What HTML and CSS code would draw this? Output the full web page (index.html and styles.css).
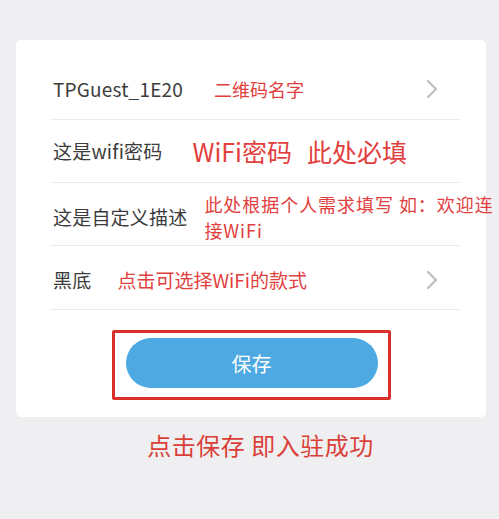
FILE: index.html
```html
<!DOCTYPE html>
<html lang="zh-CN">
<head>
<meta charset="utf-8">
<title>WiFi</title>
<link rel="stylesheet" href="styles.css">
</head>
<body>
<div class="page">
  <div class="card">
    <div class="list">
      <div class="row row-1">
        <span class="label">TPGuest_1E20</span>
        <span class="note note-1">二维码名字</span>
        <svg class="chev" width="14" height="22" viewBox="0 0 14 22"><polyline points="3,3 11,11 3,19" fill="none" stroke="#c2c2c2" stroke-width="2.4" stroke-linecap="round" stroke-linejoin="round"/></svg>
      </div>
      <div class="row row-2">
        <span class="label">这是wifi密码</span>
        <span class="note note-2">WiFi密码<span class="gap"></span>此处必填</span>
      </div>
      <div class="row row-3">
        <span class="label">这是自定义描述</span>
        <span class="note note-3">此处根据个人需求填写 如：欢迎连<br>接WiFi</span>
      </div>
      <div class="row row-4">
        <span class="label">黑底</span>
        <span class="note note-4">点击可选择WiFi的款式</span>
        <svg class="chev" width="14" height="22" viewBox="0 0 14 22"><polyline points="3,3 11,11 3,19" fill="none" stroke="#c2c2c2" stroke-width="2.4" stroke-linecap="round" stroke-linejoin="round"/></svg>
      </div>
    </div>
    <div class="save-wrap">
      <div class="save-box">
        <button class="save-btn">保存</button>
      </div>
    </div>
  </div>
  <div class="tip">点击保存 即入驻成功</div>
</div>
</body>
</html>
```

FILE: styles.css
```css
html, body {
  margin: 0;
  padding: 0;
}
body {
  background: #efeff1;
  font-family: "Noto Sans CJK SC", "Noto Sans", sans-serif;
  color: #383838;
}
.page {
  width: 499px;
  height: 519px;
  overflow: hidden;
  padding-top: 40px;
  box-sizing: border-box;
}
.card {
  margin-left: 16px;
  width: 470px;
  height: 377px;
  background: #ffffff;
  border-radius: 5px;
  box-sizing: border-box;
  padding-top: 18px;
}
.list {
  margin: 0 26px 0 34px;
}
.row {
  display: flex;
  align-items: center;
  border-bottom: 1px solid #ececec;
  padding-left: 3px;
  box-sizing: border-box;
}
.row-1 { height: 62px; }
.row-2 { height: 63px; }
.row-3 { height: 63px; padding-top: 6px; }
.row-4 { height: 64px; padding-top: 4px; }
.label {
  font-size: 19px;
  line-height: 26px;
  white-space: nowrap;
  color: #3c3c3c;
  letter-spacing: 0.2px;
}
.note {
  color: #e2403e;
  white-space: nowrap;
}
.note-1 { font-size: 18px; margin-left: 31px; }
.note-2 { font-size: 25px; margin-left: 30px; display: flex; align-items: center; }
.gap { display: inline-block; width: 15px; }
.note-3 { font-size: 18px; line-height: 26px; margin-left: 17px; letter-spacing: 0.95px; }
.note-4 { font-size: 19px; margin-left: 26px; }
.chev {
  margin-left: auto;
  margin-right: 21px;
}
.save-wrap {
  display: flex;
  justify-content: center;
  padding-top: 20px;
}
.save-box {
  border: 3px solid #d8312b;
  border-radius: 2px;
  padding: 5px 10px 9px 11px;
  width: 279px;
  box-sizing: border-box;
}
.save-btn {
  display: block;
  width: 252px;
  height: 50px;
  border: none;
  border-radius: 25px;
  background: #4ea8e2;
  color: #ffffff;
  font-family: "Noto Sans CJK SC", sans-serif;
  font-size: 20px;
  padding: 0;
}
.tip {
  margin-top: 13px;
  text-align: center;
  font-size: 24px;
  line-height: 30px;
  color: #da3f38;
  padding-left: 22px;
  letter-spacing: 0.5px;
}
```
